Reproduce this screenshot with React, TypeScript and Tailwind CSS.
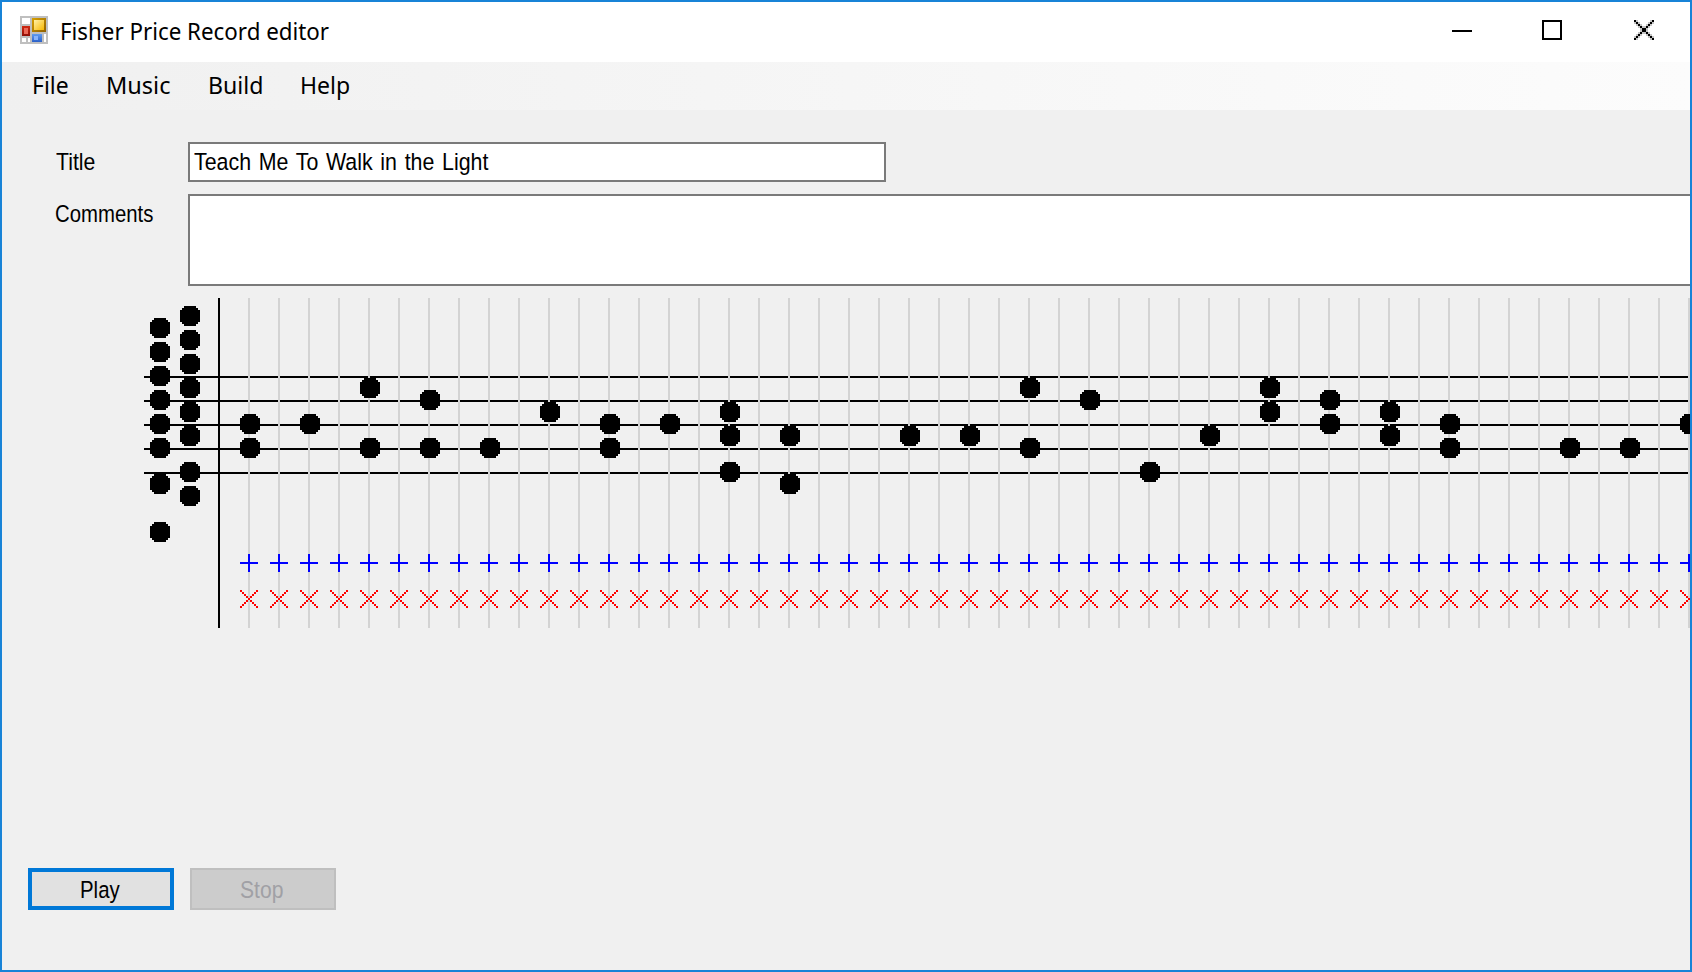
import React, { useLayoutEffect, useRef, useState } from "react";

const staffLines = [376, 400, 424, 448, 472];
const combA = [328, 352, 376, 400, 424, 448, 484, 532];
const combB = [316, 340, 364, 388, 412, 436, 472, 496];
const notes: [number, number[]][] = [
  [0, [424, 448]], [2, [424]], [4, [388, 448]], [6, [400, 448]], [8, [448]],
  [10, [412]], [12, [424, 448]], [14, [424]], [16, [412, 436, 472]], [18, [436, 484]],
  [22, [436]], [24, [436]], [26, [388, 448]], [28, [400]], [30, [472]],
  [32, [436]], [34, [388, 412]], [36, [400, 424]], [38, [412, 436]], [40, [424, 448]],
  [44, [448]], [46, [448]], [48, [424]],
];
const columns = Array.from({ length: 49 }, (_, i) => i);
const diagonal = Array.from({ length: 9 }, (_, i) => i * 2);
const TOP = 298;

function Dot({ cx, cy }: { cx: number; cy: number }) {
  return (
    <path
      transform={`translate(${cx - 10} ${cy - 10 - TOP})`}
      d="M4 0H16V2H18V4H20V16H18V18H16V20H4V18H2V16H0V4H2V2H4Z"
    />
  );
}

function Staff() {
  return (
    <svg className="block h-[330px] w-[1688px]" viewBox="2 0 1688 330" shapeRendering="crispEdges">
      {staffLines.map((y) => (
        <rect key={y} x={144} y={y - TOP} width={1544} height={2} />
      ))}
      <rect x={218} y={0} width={2} height={330} />
      {columns.map((c) => {
        const x = 248 + c * 30;
        return (
          <g key={c}>
            <rect x={x} y={0} width={2} height={330} fill="#d3d3d3" />
            <path fill="#0000ff" d={`M${x - 8} 264h18v2h-18zM${x} 256h2v18h-2z`} />
            <path
              fill="#ff0000"
              d={diagonal
                .map((d) => `M${x - 8 + d} ${292 + d}h2v2h-2zM${x + 8 - d} ${292 + d}h2v2h-2z`)
                .join("")}
            />
          </g>
        );
      })}
      {combA.map((y) => <Dot key={y} cx={160} cy={y} />)}
      {combB.map((y) => <Dot key={y} cx={190} cy={y} />)}
      {notes.map(([c, ys]) => ys.map((y) => <Dot key={`${c}-${y}`} cx={250 + c * 30} cy={y} />))}
    </svg>
  );
}

function AppIcon() {
  return (
    <svg className="h-7 w-7" viewBox="0 0 28 28" shapeRendering="crispEdges">
      <defs>
        <linearGradient id="gold" x1="0" y1="0" x2="1" y2="1">
          <stop offset="0" stopColor="#fff0a8" />
          <stop offset="1" stopColor="#f8b800" />
        </linearGradient>
        <linearGradient id="goldEdge" x1="0" y1="0" x2="1" y2="1">
          <stop offset="0" stopColor="#d8a000" />
          <stop offset="1" stopColor="#906000" />
        </linearGradient>
        <linearGradient id="red" x1="0" y1="0" x2="0" y2="1">
          <stop offset="0" stopColor="#d02810" />
          <stop offset="1" stopColor="#901008" />
        </linearGradient>
        <linearGradient id="blue" x1="0" y1="0" x2="0" y2="1">
          <stop offset="0" stopColor="#609cf0" />
          <stop offset="1" stopColor="#2c60c8" />
        </linearGradient>
      </defs>
      <rect width="28" height="28" fill="#bfbfbf" />
      <path fill="#fff" d="M2 2h8v6H2zM2 22h4v4H2zM8 22h2v4H8zM24 18h2v8h-2z" />
      <rect x="12" y="2" width="14" height="14" fill="url(#goldEdge)" />
      <rect x="14" y="4" width="10" height="10" fill="url(#gold)" />
      <rect x="2" y="10" width="8" height="10" fill="url(#red)" />
      <rect x="4" y="12" width="4" height="6" fill="#ec6858" />
      <rect x="12" y="18" width="10" height="8" fill="url(#blue)" />
      <rect x="14" y="20" width="4" height="4" fill="#88b4fc" />
    </svg>
  );
}

const closeSteps = Array.from({ length: 10 }, (_, i) => i * 2);

function CaptionButtons() {
  return (
    <svg className="ml-auto h-[60px] w-[240px]" viewBox="1450 2 240 60" shapeRendering="crispEdges">
      <rect x="1452" y="30" width="20" height="2" />
      <rect x="1543" y="21" width="18" height="18" fill="none" stroke="#000" strokeWidth="2" />
      <path
        fill="#c4c4c4"
        d={closeSteps
          .slice(0, 9)
          .map(
            (d) =>
              `M${1636 + d} ${20 + d}h2v2h-2zM${1634 + d} ${22 + d}h2v2h-2z` +
              `M${1650 - d} ${20 + d}h2v2h-2zM${1652 - d} ${22 + d}h2v2h-2z`,
          )
          .join("")}
      />
      <path
        d={closeSteps
          .map((d) => `M${1634 + d} ${20 + d}h2v2h-2zM${1652 - d} ${20 + d}h2v2h-2z`)
          .join("")}
      />
    </svg>
  );
}

/* Condenses a line of text so that it fills exactly the given width. */
function Label({ text, width }: { text: string; width: number }) {
  const ref = useRef<HTMLSpanElement>(null);
  const [scale, setScale] = useState(1);
  useLayoutEffect(() => {
    if (ref.current) setScale(width / ref.current.offsetWidth);
  }, [width, text]);
  return (
    <span className="block h-8 leading-8" style={{ width }}>
      <span
        ref={ref}
        className="inline-block origin-left whitespace-nowrap"
        style={{ transform: `scaleX(${scale})` }}
      >
        {text}
      </span>
    </span>
  );
}

export default function App() {
  return (
    <div className="flex h-[972px] w-[1692px] flex-col overflow-hidden border-2 border-[#1883d7] bg-[#f0f0f0] text-black">
      <header className="flex h-[60px] shrink-0 items-start bg-white font-['Noto_Sans',sans-serif] text-[23.5px]">
        <div className="ml-[18px] mt-[14px]"><AppIcon /></div>
        <div className="ml-3 mt-[13px]"><Label text="Fisher Price Record editor" width={269} /></div>
        <CaptionButtons />
      </header>
      <nav className="flex h-12 shrink-0 items-start bg-linear-to-r from-[#f0f0f0] to-[#fcfcfc] pl-[30px] pt-[7px] font-['Noto_Sans',sans-serif] text-[23.5px]">
        <div className="w-[74px]"><Label text="File" width={37} /></div>
        <div className="w-[102px]"><Label text="Music" width={64} /></div>
        <div className="w-[92px]"><Label text="Build" width={55} /></div>
        <Label text="Help" width={50} />
      </nav>
      <main className="flex grow flex-col font-['Liberation_Sans',Arial,sans-serif] text-[24.5px]">
        <div className="mt-8 flex h-10">
          <div className="w-[186px] pl-[54px] pt-[4px]"><Label text="Title" width={39} /></div>
          <div className="w-[698px] border-2 border-[#7a7a7a] bg-white pl-1 pt-[2px] [word-spacing:2px]">
            <Label text="Teach Me To Walk in the Light" width={294} />
          </div>
        </div>
        <div className="mt-3 flex h-[92px]">
          <div className="w-[186px] shrink-0 pl-[53px] pt-1"><Label text="Comments" width={98} /></div>
          <div className="grow border-2 border-r-0 border-[#7a7a7a] bg-white" />
        </div>
        <div className="mt-3"><Staff /></div>
        <div className="mt-[240px] flex gap-4 pl-[26px]">
          <button className="flex h-[42px] w-[146px] border-4 border-[#0078d7] bg-[#e1e1e1] pl-12 pt-[2px] text-left">
            <Label text="Play" width={40} />
          </button>
          <button disabled className="flex h-[42px] w-[146px] border-2 border-[#bfbfbf] bg-[#cccccc] pl-[48px] pt-1 text-left text-[#a0a0a5]">
            <Label text="Stop" width={43} />
          </button>
        </div>
      </main>
    </div>
  );
}
